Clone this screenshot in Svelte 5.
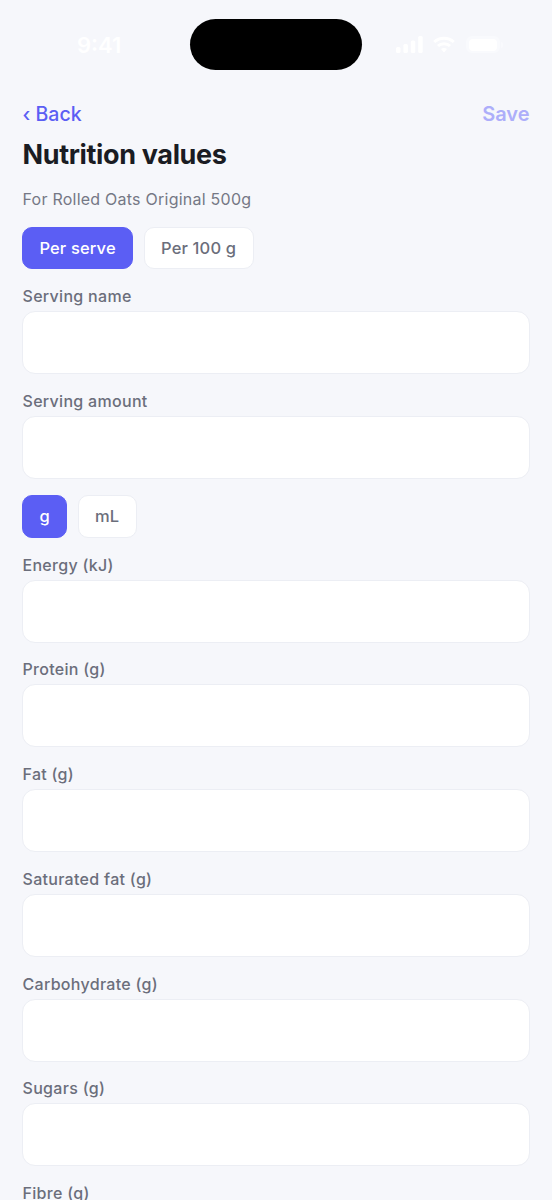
<script lang="ts">
const group1 = [
  { label: "Serving name" },
  { label: "Serving amount" },
];
const group2 = [
  "Energy (kJ)",
  "Protein (g)",
  "Fat (g)",
  "Saturated fat (g)",
  "Carbohydrate (g)",
  "Sugars (g)",
  "Fibre (g)",
];
</script>

<div class="screen">
  <div class="status">
    <span class="time">9:41</span>
    <div class="island"></div>
    <div class="status-icons">
      <svg width="27" height="17" viewBox="0 0 27 17" fill="#fff">
        <rect x="0" y="11" width="4.5" height="6" rx="1.5" />
        <rect x="7.4" y="8" width="4.5" height="9" rx="1.5" />
        <rect x="14.8" y="4.5" width="4.5" height="12.5" rx="1.5" />
        <rect x="22.2" y="0" width="4.5" height="17" rx="1.5" />
      </svg>
      <svg width="22" height="17" viewBox="0 0 22 17" fill="none" stroke="#fff" stroke-width="3">
        <path d="M1.2 6 C6.8 1 15.2 1 20.8 6" />
        <path d="M5 10 C8 7 14 7 17 10" />
        <path d="M8 13 L11 16.5 L14 13 C12 11.6 10 11.6 8 13 Z" fill="#fff" stroke="none" />
      </svg>
      <div class="battery"><div class="battery-fill"></div></div>
    </div>
  </div>

  <div class="nav">
    <span class="back">‹ Back</span>
    <span class="save">Save</span>
  </div>

  <h1>Nutrition values</h1>
  <p class="sub">For Rolled Oats Original 500g</p>

  <div class="seg">
    <button class="on">Per serve</button>
    <button>Per 100 g</button>
  </div>

  {#each group1 as f}
    <div class="field">
      <span class="label">{f.label}</span>
      <div class="input"></div>
    </div>
  {/each}

  <div class="seg">
    <button class="on">g</button>
    <button>mL</button>
  </div>

  {#each group2 as f}
    <div class="field">
      <span class="label">{f}</span>
      <div class="input"></div>
    </div>
  {/each}
</div>

<style>
  :global(body) {
    margin: 0;
    background: #f6f7fb;
  }

  .screen {
    height: 1200px;
    overflow: hidden;
    box-sizing: border-box;
    padding: 19px 22px 0;
    background: #f6f7fb;
    font-family: Inter, "Liberation Sans", sans-serif;
  }

  .status {
    display: grid;
    grid-template-columns: 1fr 172px 1fr;
    align-items: center;
    height: 51px;
  }

  .time {
    justify-self: start;
    margin-left: 55px;
    color: #fff;
    font-size: 22px;
    font-weight: 600;
    line-height: 1;
  }

  .island {
    height: 51px;
    border-radius: 25.5px;
    background: #000;
  }

  .status-icons {
    display: flex;
    align-items: center;
    gap: 10px;
    margin-left: 34px;
  }

  .battery {
    position: relative;
    box-sizing: border-box;
    width: 34px;
    height: 17px;
    margin-left: 1px;
    padding: 2.5px 3px;
    border-radius: 6px;
    background: #f9fafd;
  }

  .battery::after {
    content: "";
    position: absolute;
    top: 5.5px;
    right: -3px;
    width: 2px;
    height: 6px;
    border-radius: 0 2px 2px 0;
    background: #f9fafd;
  }

  .battery-fill {
    height: 100%;
    border-radius: 4px;
    background: #fff;
  }

  .nav {
    display: flex;
    justify-content: space-between;
    align-items: center;
    margin-top: 32px;
    height: 24px;
    padding-left: 0.5px;
    font-size: 19.5px;
    font-weight: 500;
    color: #5b5ef4;
  }

  .save {
    font-size: 20px;
    font-weight: 600;
    margin-right: 0.5px;
    color: #adaefa;
  }

  h1 {
    margin: 11px 0 0;
    padding-left: 0.5px;
    font-size: 27px;
    line-height: 36px;
    font-weight: 700;
    letter-spacing: -0.35px;
    color: #1a1c23;
  }

  .sub {
    margin: 14px 0 0;
    padding-left: 0.5px;
    font-size: 16px;
    line-height: 24px;
    letter-spacing: 0.24px;
    color: #757885;
  }

  .seg {
    display: flex;
    gap: 10.5px;
    margin: 15.7px 0 15px;
  }

  button {
    box-sizing: border-box;
    height: 42.7px;
    padding: 0 16.4px;
    border: 1px solid #eceef4;
    border-radius: 10px;
    background: #fff;
    color: #6b6e7b;
    font: 550 16.5px Inter, "Liberation Sans", sans-serif;
    letter-spacing: 0.15px;
  }

  button.on {
    border-color: #5b5ef4;
    background: #5b5ef4;
    color: #fff;
  }

  .field {
    margin-bottom: 14.75px;
  }

  .label {
    display: block;
    height: 24px;
    margin-bottom: 3px;
    padding-left: 0.5px;
    font-size: 16px;
    line-height: 24px;
    font-weight: 550;
    letter-spacing: 0.3px;
    color: #6b6e7b;
  }

  .input {
    box-sizing: border-box;
    height: 63px;
    border: 1px solid #eceef4;
    border-radius: 13px;
    background: #fff;
  }
</style>
